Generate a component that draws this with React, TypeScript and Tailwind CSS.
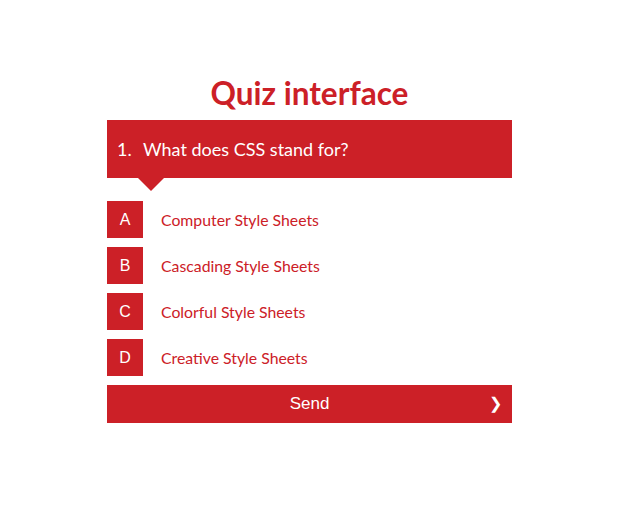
import React from 'react';

const options = [
  { key: 'A', label: 'Computer Style Sheets' },
  { key: 'B', label: 'Cascading Style Sheets' },
  { key: 'C', label: 'Colorful Style Sheets' },
  { key: 'D', label: 'Creative Style Sheets' },
];

function Option({ letter, label }: { letter: string; label: string }) {
  return (
    <li className="flex items-center h-[37px]">
      <span className="w-[36px] h-full flex items-center justify-center pt-[1px] bg-[#cc2027] text-white text-[16px] font-['Liberation_Sans',sans-serif]">
        {letter}
      </span>
      <span className="ml-[18px] pt-[1px] text-[15.8px] text-[#cc2027]">{label}</span>
    </li>
  );
}

export default function App() {
  return (
    <div className="min-h-[507px] bg-white font-['Lato',sans-serif] pt-[73px] pl-[107px]">
      <div className="w-[405px]">
        <h1 className="text-center text-[31.5px] leading-[40px] font-bold text-[#cc2027]">Quiz interface</h1>
        <div className="relative mt-[7px] h-[58px] bg-[#cc2027] flex items-center px-[10px] text-white text-[18px]">
          <span className="w-[26px]">1.</span>
          <span>What does CSS stand for?</span>
          <span className="absolute left-[31px] top-full w-0 h-0 border-l-[13px] border-r-[13px] border-t-[13px] border-l-transparent border-r-transparent border-t-[#cc2027]" />
        </div>
        <ul className="mt-[23px] flex flex-col gap-[9px]">
          {options.map((o) => (
            <Option key={o.key} letter={o.key} label={o.label} />
          ))}
        </ul>
        <button className="relative mt-[9px] w-full h-[38px] bg-[#cc2027] text-white text-[17px] font-['Liberation_Sans',sans-serif]">
          Send
          <span className="absolute right-[10px] top-1/2 -translate-y-1/2 text-[16px]">❯</span>
        </button>
      </div>
    </div>
  );
}
